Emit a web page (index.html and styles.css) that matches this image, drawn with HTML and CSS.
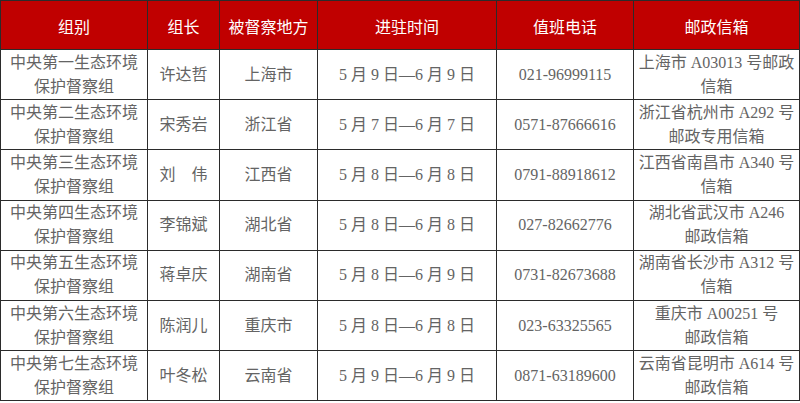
FILE: index.html
```html
<!DOCTYPE html>
<html lang="zh">
<head>
<meta charset="utf-8">
<link rel="stylesheet" href="styles.css">
</head>
<body>
<table class="tbl">
  <colgroup>
    <col class="c1"><col class="c2"><col class="c3"><col class="c4"><col class="c5"><col class="c6">
  </colgroup>
  <thead>
    <tr><th>组别</th><th>组长</th><th>被督察地方</th><th>进驻时间</th><th>值班电话</th><th>邮政信箱</th></tr>
  </thead>
  <tbody>
    <tr><td>中央第一生态环境<br>保护督察组</td><td>许达哲</td><td>上海市</td><td>5 月 9 日—6 月 9 日</td><td>021-96999115</td><td>上海市 A03013 号邮政<br>信箱</td></tr>
    <tr><td>中央第二生态环境<br>保护督察组</td><td>宋秀岩</td><td>浙江省</td><td>5 月 7 日—6 月 7 日</td><td>0571-87666616</td><td>浙江省杭州市 A292 号<br>邮政专用信箱</td></tr>
    <tr><td>中央第三生态环境<br>保护督察组</td><td>刘　伟</td><td>江西省</td><td>5 月 8 日—6 月 8 日</td><td>0791-88918612</td><td>江西省南昌市 A340 号<br>信箱</td></tr>
    <tr><td>中央第四生态环境<br>保护督察组</td><td>李锦斌</td><td>湖北省</td><td>5 月 8 日—6 月 8 日</td><td>027-82662776</td><td>湖北省武汉市 A246<br>邮政信箱</td></tr>
    <tr><td>中央第五生态环境<br>保护督察组</td><td>蒋卓庆</td><td>湖南省</td><td>5 月 8 日—6 月 9 日</td><td>0731-82673688</td><td>湖南省长沙市 A312 号<br>信箱</td></tr>
    <tr><td>中央第六生态环境<br>保护督察组</td><td>陈润儿</td><td>重庆市</td><td>5 月 8 日—6 月 8 日</td><td>023-63325565</td><td>重庆市 A00251 号<br>邮政信箱</td></tr>
    <tr><td>中央第七生态环境<br>保护督察组</td><td>叶冬松</td><td>云南省</td><td>5 月 9 日—6 月 9 日</td><td>0871-63189600</td><td>云南省昆明市 A614 号<br>邮政信箱</td></tr>
  </tbody>
</table>
</body>
</html>
```
FILE: styles.css
```css
html, body {
  margin: 0;
  padding: 0;
  background: #ffffff;
}
.tbl {
  border-collapse: collapse;
  table-layout: fixed;
  width: 799px;
  font-family: "Liberation Serif", "Noto Sans CJK SC", serif;
  font-size: 16px;
}
.c1 { width: 147px; }
.c2 { width: 72px; }
.c3 { width: 98px; }
.c4 { width: 179px; }
.c5 { width: 137px; }
.c6 { width: 166px; }
.tbl th,
.tbl td {
  border: 1px solid #2b2b2b;
  text-align: center;
  vertical-align: middle;
  padding: 0;
  white-space: nowrap;
  overflow: hidden;
}
.tbl th {
  background: #c00000;
  color: #ffffff;
  font-family: "Noto Sans CJK SC", sans-serif;
  font-weight: normal;
  height: 49px;
  line-height: 24px;
  padding-top: 2px;
  box-sizing: border-box;
}
.tbl td {
  color: #646464;
  height: 49.2px;
  line-height: 24px;
}
```
